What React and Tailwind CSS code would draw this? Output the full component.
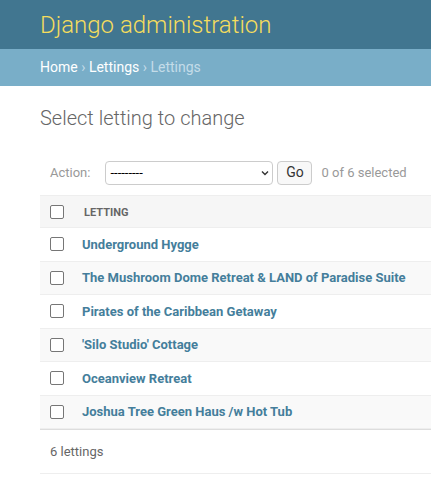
import React from "react";

const lettings = [
  "Underground Hygge",
  "The Mushroom Dome Retreat & LAND of Paradise Suite",
  "Pirates of the Caribbean Getaway",
  "'Silo Studio' Cottage",
  "Oceanview Retreat",
  "Joshua Tree Green Haus /w Hot Tub",
];

function Checkbox() {
  return (
    <span className="inline-block w-[14px] h-[14px] border border-[#767676] rounded-[2px] bg-white shrink-0" />
  );
}

export default function App() {
  return (
    <div className="min-h-[499px] bg-white text-[#333] font-['Roboto',sans-serif] overflow-hidden">
      {/* Header */}
      <div className="h-[49px] bg-[#417690] px-10 flex items-center">
        <h1 className="text-[24px] font-light text-[#f5dd5d] leading-none">
          Django administration
        </h1>
      </div>

      {/* Breadcrumbs */}
      <div className="h-[37px] bg-[#79aec8] px-10 flex items-center text-[14px] text-white">
        <span>Home</span>
        <span className="mx-[3.5px] text-[#c4dce8]">›</span>
        <span>Lettings</span>
        <span className="mx-[3.5px] text-[#c4dce8]">›</span>
        <span className="text-[#c4dce8]">Lettings</span>
      </div>

      {/* Content */}
      <div className="pl-10 pt-[20px]">
        <h2 className="text-[20px] font-light text-[#666] leading-[24px] mb-[20px]">
          Select letting to change
        </h2>

        {/* Actions */}
        <div className="flex items-center p-[10px] text-[13px] h-[45px]">
          <span className="text-[#999]">Action:</span>
          <div className="ml-[15px] w-[168px] h-[24px] border border-[#ccc] rounded-[4px] flex items-center justify-between pl-[4px] pr-[2px] text-black">
            <span className="text-[13px] leading-none">---------</span>
            <svg width="10" height="10" viewBox="0 0 10 10">
              <path d="M2 3.5 L5 6.5 L8 3.5" fill="none" stroke="#333" strokeWidth="1.4" />
            </svg>
          </div>
          <div className="ml-[4px] h-[24px] w-[35px] border border-[#ccc] rounded-[4px] bg-[#f8f8f8] flex items-center justify-center text-[14px] text-[#333]">
            Go
          </div>
          <span className="ml-[9px] text-[#999]">0 of 6 selected</span>
        </div>

        {/* Table */}
        <div className="text-[13px]">
          <div className="h-[33px] bg-[#f6f6f6] border-y border-[#eee] flex items-center pl-[10px]">
            <Checkbox />
            <span className="ml-[20px] pt-[4px] text-[11px] font-bold text-[#666] uppercase">
              Letting
            </span>
          </div>
          {lettings.map((name, i) => (
            <div
              key={name}
              className={`h-[33.5px] flex items-center pl-[10px] border-b border-[#eee] ${
                i % 2 === 1 ? "bg-[#f9f9f9]" : "bg-white"
              }`}
            >
              <Checkbox />
              <a className="ml-[18px] font-bold text-[#447e9b] whitespace-nowrap">{name}</a>
            </div>
          ))}
          <div className="h-[45px] border-t border-[#ddd] border-b border-b-[#eee] flex items-center pl-[10px] pt-[1px] text-[#666]">
            6 lettings
          </div>
        </div>
      </div>
    </div>
  );
}
